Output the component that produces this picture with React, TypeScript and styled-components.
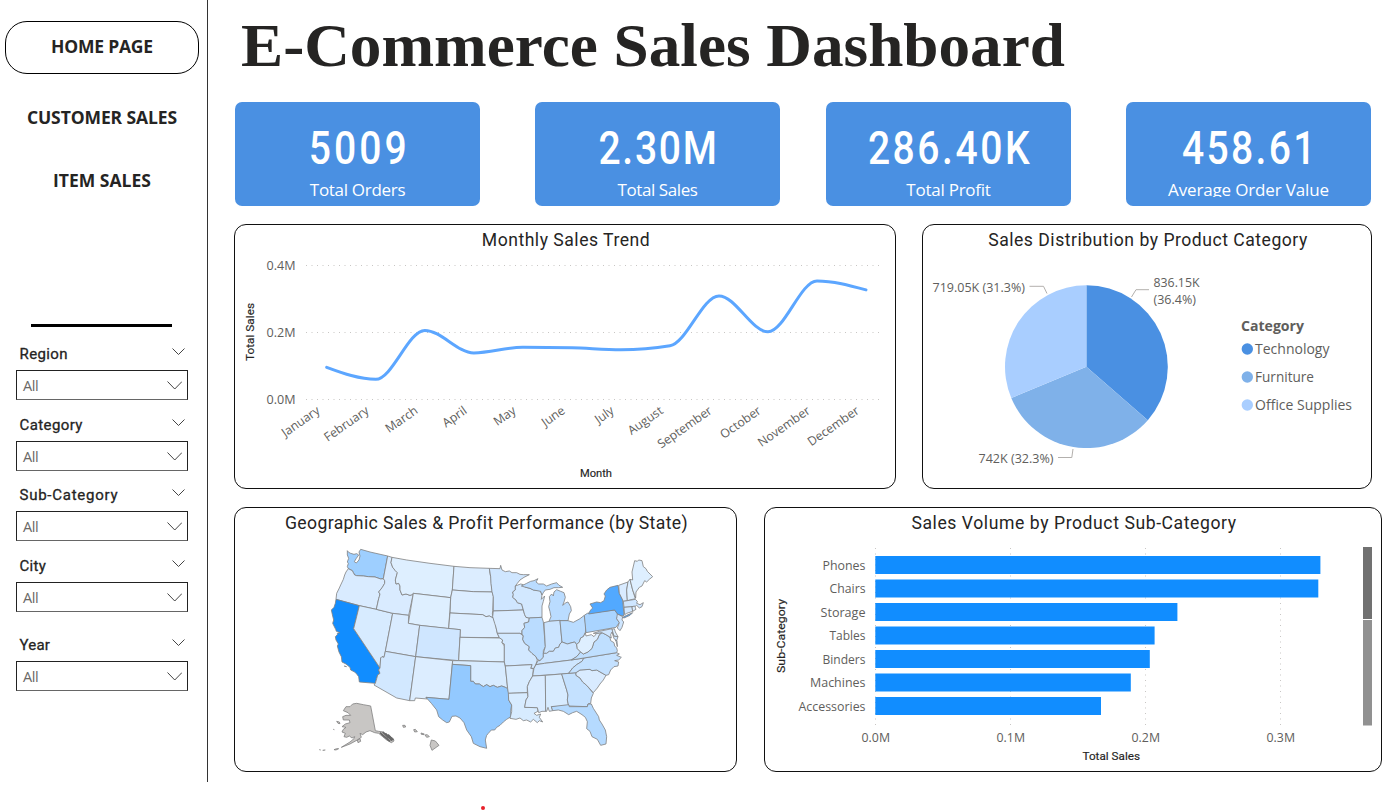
import React from "react";
import styled, { createGlobalStyle } from "styled-components";

const ui = `"Open Sans", "Noto Sans", sans-serif`;
const din = `Roboto, "Liberation Sans", sans-serif`;

const GlobalStyle = createGlobalStyle`
  * { box-sizing: border-box; }
  body { margin: 0; background: #fff; color: #252423; overflow: hidden; }
  h1, h2, h3, p { margin: 0; font-weight: inherit; }
`;

const Page = styled.div`
  width: 1392px;
  height: 811px;
  display: grid;
  grid-template-columns: 208px 1fr;
  grid-template-rows: 782px 29px;
`;

const Sidebar = styled.aside`
  border-right: 1.5px solid #333;
  padding: 21px 0 0 5px;
`;

const Nav = styled.nav`
  display: flex;
  flex-direction: column;
  width: 194px;
`;

const NavItem = styled.a<{ $active?: boolean; $height: number; $track: number }>`
  height: ${(p) => p.$height}px;
  display: flex;
  align-items: center;
  justify-content: center;
  border: ${(p) => (p.$active ? "1px solid #000" : "0")};
  border-radius: 22px;
  padding-bottom: 3px;
  font: 700 17.5px ${ui};
  letter-spacing: ${(p) => p.$track}px;
  white-space: nowrap;
`;

const Divider = styled.hr`
  width: 141px;
  height: 2.5px;
  border: 0;
  background: #000;
  margin: 125px 0 0 26px;
`;

const Filters = styled.div`
  padding: 17px 0 0 11px;
  width: 183px;
`;

const Filter = styled.section<{ $height: number }>`
  height: ${(p) => p.$height}px;
`;

const FilterHead = styled.div`
  height: 26px;
  display: flex;
  justify-content: space-between;
  padding: 2px 3.5px 0;
`;

const FilterLabel = styled.h3<{ $track: number }>`
  font: 400 15px/17px ${din};
  letter-spacing: ${(p) => p.$track}px;
  -webkit-text-stroke: 0.3px #252423;
`;

const Select = styled.div`
  height: 30px;
  border: 1px solid #222;
  border-bottom: 1.5px solid #666;
  padding: 2px 5px 0 6px;
  display: flex;
  align-items: center;
  justify-content: space-between;
  font: 400 14.5px ${ui};
  letter-spacing: -0.4px;
  color: #6a6866;
`;

const Chevron = styled.svg`
  fill: none;
  stroke: #444;
  stroke-width: 1;
`;

const HeadChevron = styled.div`
  padding-top: 2px;
  line-height: 0;
`;

const Main = styled.main`
  padding: 0 0 0 26px;
`;

const Title = styled.h1`
  height: 102px;
  padding: 10px 0 0 7px;
  font: 700 61px/72px "Liberation Serif", serif;
  transform: scaleX(1.036);
  transform-origin: 7px 0;
  white-space: nowrap;
  width: 850px;
`;

const Kpis = styled.div`
  display: grid;
  grid-template-columns: 300px 291px 300px 245px;
  padding-left: 1px;
`;

const Kpi = styled.div`
  width: 245px;
  height: 104px;
  border-radius: 7px;
  background: #4a90e2;
  color: #fff;
  text-align: center;
  padding-top: 19px;
`;

const KpiValue = styled.p<{ $track: number }>`
  font: 500 46.5px/54px ${din};
  letter-spacing: ${(p) => p.$track}px;
  margin-right: ${(p) => -p.$track}px;
  transform: scaleX(0.84);
  white-space: nowrap;
`;

const KpiLabel = styled.p<{ $track: number; $clip?: boolean }>`
  height: ${(p) => (p.$clip ? 22 : 29)}px;
  overflow: ${(p) => (p.$clip ? "hidden" : "visible")};
  font: 400 17px/29px ${ui};
  letter-spacing: ${(p) => p.$track}px;
`;

const Row = styled.div<{ $cols: string }>`
  display: grid;
  grid-template-columns: ${(p) => p.$cols};
  margin-top: 18px;
`;

const Panel = styled.section<{ $width: number }>`
  width: ${(p) => p.$width}px;
  height: 265px;
  border: 1px solid #111;
  border-radius: 12px;
  overflow: hidden;
`;

const PanelTitle = styled.h2<{ $track: number }>`
  height: 30px;
  padding-left: 2px;
  text-align: center;
  font: 400 17.6px/30px ${din};
  letter-spacing: ${(p) => p.$track}px;
  white-space: nowrap;
`;

const Chart = styled.svg`
  display: block;
`;

const Tick = styled.text`
  font: 400 12.3px ${ui};
  fill: #605e5c;
`;

const AxisTitle = styled.text`
  font: 400 11px ${din};
  fill: #252423;
  stroke: #252423;
  stroke-width: 0.15px;
`;

const GridLine = styled.path`
  stroke: #c8c6c4;
  stroke-width: 1;
  stroke-dasharray: 1 4.5;
  fill: none;
`;

const LegendTitle = styled.text`
  font: 700 14px ${ui};
  fill: #605e5c;
`;

const LegendText = styled.text`
  font: 400 14px ${ui};
  fill: #605e5c;
`;

const Footer = styled.footer`
  grid-column: 1 / -1;
  padding: 24px 0 0 481px;
`;

const Marker = styled.div`
  width: 4px;
  height: 4px;
  border-radius: 2px;
  background: #e8202a;
`;

const filters = [
  { name: "Region", height: 71, track: 0.4 },
  { name: "Category", height: 70, track: 0.4 },
  { name: "Sub-Category", height: 71, track: 0.75 },
  { name: "City", height: 79, track: 0.3 },
  { name: "Year", height: 60, track: 0.2 },
];

const kpis = [
  { value: "5009", label: "Total Orders", vt: 3.6, lt: -0.3 },
  { value: "2.30M", label: "Total Sales", vt: 2, lt: -0.4 },
  { value: "286.40K", label: "Total Profit", vt: 3, lt: -0.25 },
  { value: "458.61", label: "Average Order Value", vt: 2.8, lt: -0.15, clip: true },
];

const months: [string, number, number][] = [
  ["January", 326.7, 367.3],
  ["February", 375.8, 379.3],
  ["March", 424.8, 330.4],
  ["April", 473.8, 352.9],
  ["May", 522.9, 347.2],
  ["June", 571.9, 347.8],
  ["July", 620.9, 349.7],
  ["August", 670, 345.8],
  ["September", 719, 295.9],
  ["October", 768, 331.8],
  ["November", 817, 280.9],
  ["December", 866, 289.9],
];

// Monotone cubic interpolation through the monthly values.
function monotone(pts: [number, number][]) {
  const n = pts.length;
  const s = pts.slice(1).map((p, i) => (p[1] - pts[i][1]) / (p[0] - pts[i][0]));
  const t = pts.map((_, i) => {
    if (i === 0 || i === n - 1) return 0;
    const a = s[i - 1];
    const b = s[i];
    return (Math.sign(a) + Math.sign(b)) * Math.min(Math.abs(a), Math.abs(b), 0.25 * Math.abs(a + b));
  });
  t[0] = (3 * s[0] - t[1]) / 2;
  t[n - 1] = (3 * s[n - 2] - t[n - 2]) / 2;
  let d = `M${pts[0][0]},${pts[0][1]}`;
  for (let i = 1; i < n; i++) {
    const h = (pts[i][0] - pts[i - 1][0]) / 3;
    d += `C${pts[i - 1][0] + h},${pts[i - 1][1] + h * t[i - 1]} ${pts[i][0] - h},${pts[i][1] - h * t[i]} ${pts[i][0]},${pts[i][1]}`;
  }
  return d;
}

const bars: [string, number, number][] = [
  ["Phones", 1320.4, 43],
  ["Chairs", 1318.3, 36],
  ["Storage", 1177.4, 45],
  ["Tables", 1154.6, 36],
  ["Binders", 1149.8, 43],
  ["Machines", 1130.8, 55.5],
  ["Accessories", 1101, 67],
];

const west: [string, string][] = [
  ["#9ecfff", "82,32 86,37 92,40 102,43 110,41 116,45 109,55 103,65 109,69 117,60 120,48 117,36 122,28 150,36 203,48 190,116 182,117 165,111 145,110 130,108 110,107 104,105 100,98 97,92 85,86 82,80 85,70 82,66 86,55 82,45"],
  ["#d9ebff", "85,86 97,92 100,98 104,105 110,107 130,108 145,110 165,111 182,117 190,116 194,122 194,130 187,142 176,156 180,162 178,170 176,176 169,208 118,197 48,178 50,160 58,144 62,135 70,118 74,105 78,96"],
  ["#118dff", "48,178 118,197 101,266 180,384 176,390 180,400 173,405 170,416 166,430 118,426 116,410 110,402 104,396 92,390 90,382 78,372 66,366 64,350 57,336 52,318 55,312 48,300 46,290 52,284 52,280 60,278 49,274 47,268 38,250 41,240 38,228 34,210 42,202 46,190"],
  ["#d7ebff", "118,197 169,208 218,220 196,334 192,352 186,350 182,354 180,384 101,266"],
  ["#d9ebff", "203,48 216,52 213,68 218,82 226,92 232,98 226,120 228,132 236,130 240,138 240,150 246,165 258,162 270,166 276,164 280,160 266,226 218,220 169,208 176,176 178,170 180,162 176,156 187,142 194,130 194,122 190,116"],
  ["#deefff", "216,52 260,60 330,70 402,79 397,150 392,173 280,160 276,164 270,166 258,162 246,165 240,150 240,138 236,130 228,132 226,120 232,98 226,92 218,82 213,68"],
  ["#dcedff", "402,79 450,83 508,85 510,100 513,115 514,135 517,156 460,155 397,150"],
  ["#dcedff", "397,150 460,155 517,156 520,170 518,212 517,222 520,234 508,228 498,230 488,224 390,219 392,173"],
  ["#deefff", "280,160 392,173 386,266 299,256 265,250"],
  ["#dcedff", "390,219 488,224 498,230 508,228 520,234 526,250 528,262 532,280 538,293 420,292 421,269 386,266"],
  ["#d9ebff", "218,220 266,226 265,250 299,256 287,350 196,334"],
  ["#cfe6ff", "299,256 421,269 416,362 287,350"],
  ["#d2e8ff", "196,334 287,350 269,482 230,474 162,435 166,430 170,416 173,405 180,400 176,390 180,384 182,354 186,350 192,352"],
  ["#dcedff", "287,350 398,362 387,478 318,472 322,477 286,474 284,482 269,482"],
  ["#deefff", "420,292 540,294 548,300 546,308 553,318 553,366 416,362"],
  ["#d7ebff", "398,362 416,362 553,366 556,380 563,446 556,442 545,438 532,442 520,436 510,440 500,434 490,440 478,432 466,432 460,424 452,424 452,377 397,373"],
  ["#93c9ff", "397,373 452,377 452,424 460,424 466,432 478,432 490,440 500,434 510,440 520,436 532,442 545,438 556,442 563,446 566,458 566,480 575,495 572,512 573,530 560,538 550,546 540,556 530,562 524,570 514,570 505,580 500,586 496,600 500,625 480,620 460,610 454,590 440,570 432,548 420,534 408,528 396,529 388,546 380,548 368,540 356,530 350,510 334,490 318,472 387,478"],
];

const east: [string, string][] = [
  ["#cfe6ff", "28,85 60,86 62,76 66,90 76,95 88,93 96,98 110,98 120,103 130,104 148,104 132,112 120,120 112,130 106,138 106,150 98,156 100,164 98,172 108,180 112,188 125,192 130,210 40,213 40,170 36,155 33,130 32,110"],
  ["#d9ebff", "40,213 130,210 134,224 138,232 148,234 146,246 132,250 134,262 126,272 126,282 120,280 52,280 48,262 44,250 38,230"],
  ["#d2e8ff", "52,280 120,280 130,288 128,298 134,310 148,320 146,330 156,340 168,350 172,360 168,372 162,385 152,385 156,374 76,378 73,366 73,312 66,308 68,300 58,293"],
  ["#d7ebff", "76,378 156,374 152,385 160,386 158,408 148,425 142,440 142,458 85,460 83,446"],
  ["#d7ebff", "85,460 142,458 144,470 138,480 134,502 172,503 174,514 162,520 170,526 182,522 178,532 188,546 178,542 172,548 160,538 152,546 140,540 130,542 120,534 108,538 90,535 95,515 95,495 86,480"],
  ["#d2e8ff", "106,138 122,132 130,134 134,141 150,145 160,150 180,152 184,160 186,165 184,178 194,168 190,184 186,198 186,232 148,234 138,232 134,224 130,210 125,192 112,188 108,180 98,172 100,164 98,156 106,150"],
  ["#badcff", "124,138 140,130 152,124 162,122 174,116 168,126 176,132 190,132 200,138 215,132 230,128 236,135 248,142 236,143 222,143 210,148 196,150 190,158 186,165 182,154 160,150 150,145 134,141"],
  ["#badcff", "207,244 213,230 210,215 206,200 210,185 208,170 215,162 220,168 222,156 230,149 242,154 252,158 256,172 252,186 248,196 258,188 264,186 272,200 274,212 268,222 264,242 240,242"],
  ["#badcff", "148,234 186,232 190,246 196,320 190,332 190,352 180,362 172,358 168,350 156,340 146,330 148,320 134,310 128,298 130,288 126,282 126,272 134,262 132,250 146,246"],
  ["#cbe4ff", "192,248 207,244 240,241 246,306 240,312 236,322 226,324 220,334 208,334 200,340 190,340 196,320"],
  ["#badcff", "240,242 264,242 280,247 300,236 313,226 318,262 316,278 310,290 302,294 298,306 290,314 284,306 276,308 262,312 246,306"],
  ["#cbe4ff", "190,340 200,340 208,334 220,334 226,324 236,322 240,312 246,306 262,312 276,308 284,306 290,314 292,326 302,336 290,350 274,360 194,370 168,374 174,362 180,362 190,352"],
  ["#cfe6ff", "168,374 194,370 274,360 312,354 306,364 290,374 278,384 266,400 245,402 158,408 162,385"],
  ["#d9ebff", "158,408 196,406 197,514 186,514 176,518 172,503 134,502 138,480 144,470 142,440 148,425"],
  ["#d7ebff", "196,406 245,402 260,450 264,465 262,480 266,498 214,500 218,512 208,514 204,502 200,514 197,514"],
  ["#c4e1ff", "245,402 288,398 288,406 300,414 308,426 320,436 340,460 334,474 332,490 324,492 322,500 266,498 262,480 264,465 260,450"],
  ["#b5daff", "214,500 266,494 268,500 322,500 324,492 334,492 340,505 356,530 358,540 366,552 376,570 380,590 378,612 362,616 352,598 336,590 330,574 320,566 322,545 316,532 306,524 290,514 278,518 266,524 250,514 235,510 218,512"],
  ["#d9ebff", "288,398 300,390 330,388 336,392 350,390 378,406 370,420 360,432 352,444 340,458 320,436 308,426 300,414 288,406"],
  ["#c4e1ff", "312,354 410,338 418,342 410,346 424,352 416,360 404,362 416,366 414,378 402,380 392,390 386,404 378,406 350,390 336,392 330,388 300,390 288,398 266,400 278,384 290,374 306,364"],
  ["#bfdfff", "274,360 290,350 302,336 310,342 324,336 336,325 342,306 352,298 358,284 366,278 378,284 390,292 392,302 402,308 404,318 410,324 412,332 410,338 312,354"],
  ["#deefff", "290,314 298,306 302,294 310,290 316,278 318,288 334,284 342,290 350,280 366,278 358,284 352,298 342,306 336,325 324,336 310,342 302,336 292,326"],
  ["#a9d4ff", "313,226 322,220 404,210 410,218 416,222 410,236 418,248 408,262 318,278"],
  ["#52a9ff", "326,220 332,210 338,204 330,192 350,186 362,188 372,182 376,168 372,162 380,150 390,142 414,136 418,160 428,180 432,226 426,228 412,222 404,210 326,222"],
  ["#52a9ff", "428,232 440,226 458,218 450,226 432,234"],
  ["#cfe6ff", "412,222 428,230 426,240 431,246 426,262 420,272 412,264 418,248 410,236"],
  ["#cfe6ff", "340,280 358,274 396,266 402,288 414,290 410,302 402,296 396,276 392,284 394,294 378,284 366,278 350,280"],
  ["#deefff", "396,268 403,266 406,276 414,290 402,288"],
  ["#bfdfff", "406,300 411,302 412,320 409,306"],
  ["#d9ebff", "416,136 444,126 440,150 442,182 430,184 428,180 418,160"],
  ["#deefff", "444,126 450,118 458,150 466,176 442,182 440,150"],
  ["#deefff", "450,118 458,120 456,96 464,62 472,64 476,60 486,62 490,80 498,86 502,94 518,110 508,118 500,126 494,122 486,138 478,142 468,156 467,174 458,150"],
  ["#cfe6ff", "430,184 466,178 472,184 470,190 480,194 490,188 486,200 478,204 470,196 464,200 432,202"],
  ["#d2e8ff", "432,202 456,200 458,214 440,220 434,224"],
  ["#dcedff", "456,200 464,198 468,208 458,214"],
];

const remote: string[] = [
  "110,490 130,494 152,498 166,572 176,574 190,576 204,586 220,596 222,603 214,608 200,600 188,590 176,580 164,578 150,572 138,576 128,584 120,580 124,592 112,600 90,612 64,622 90,606 102,596 104,590 96,594 88,588 80,592 72,590 76,580 66,576 70,568 78,562 66,560 76,552 90,548 88,540 70,540 68,530 78,526 92,526 84,518 70,512 78,500 90,500 98,492",
  "112,600 120,596 122,604 114,608",
  "50,544 58,546 60,551 54,550",
  "42,629 50,626 56,626 48,630",
  "248,556 255,556 257,561 250,562",
  "281,569 286,568 292,575 284,576",
  "303,579 313,582 312,584 304,583",
  "315,585 322,584 328,590 320,592",
  "334,600 346,603 357,616 336,631 330,616",
];

function Chev({ w, h }: { w: number; h: number }) {
  return (
    <Chevron width={w + 1} height={h + 1} viewBox={`-0.5 -0.5 ${w + 1} ${h + 1}`}>
      <path d={`M0,0L${w / 2},${h - 0.5}L${w},0`} />
    </Chevron>
  );
}

function TrendChart() {
  return (
    <Chart width="660" height="233" viewBox="235 255 660 233">
      {[265.5, 332.5, 399.5].map((y, i) => (
        <g key={y}>
          <GridLine d={`M306,${y}H882`} />
          <Tick x="266.5" y={y + 4.7} textLength="29" lengthAdjust="spacingAndGlyphs">{["0.4M", "0.2M", "0.0M"][i]}</Tick>
        </g>
      ))}
      <path d={monotone(months.map((m) => [m[1], m[2]]))} fill="none" stroke="#5ca6ff" strokeWidth="3" strokeLinecap="round" />
      {months.map(([name, x]) => (
        <Tick key={name} textAnchor="end" transform={`translate(${x - 6},412.5) rotate(-35)`}>{name}</Tick>
      ))}
      <AxisTitle x="580" y="477" textLength="32" lengthAdjust="spacingAndGlyphs">Month</AxisTitle>
      <AxisTitle transform="translate(254,361) rotate(-90)" textLength="58" lengthAdjust="spacingAndGlyphs">Total Sales</AxisTitle>
    </Chart>
  );
}

function PieChart() {
  const cx = 1086.4;
  const cy = 366.7;
  const r = 81.4;
  const at = (f: number) => `${cx + r * Math.sin(f * 2 * Math.PI)},${cy - r * Math.cos(f * 2 * Math.PI)}`;
  const slices: [number, number, string][] = [
    [0, 0.364, "#4a90e2"],
    [0.364, 0.687, "#7fb1e9"],
    [0.687, 1, "#a9ceff"],
  ];
  const legend: [string, string, number][] = [
    ["Technology", "#4a90e2", 74.5],
    ["Furniture", "#7fb1e9", 59],
    ["Office Supplies", "#a9ceff", 97],
  ];
  return (
    <Chart width="448" height="233" viewBox="923 255 448 233">
      {slices.map(([a, b, c]) => (
        <path key={c} d={`M${cx},${cy}L${at(a)}A${r},${r} 0 0 1 ${at(b)}Z`} fill={c} />
      ))}
      <path d="M1029.5,286.3H1043.5L1047,293.5M1149,289.7H1136L1131.5,297M1058,457.5H1071.8L1073,449" fill="none" stroke="#b3b0ad" />
      <Tick x="932.5" y="292" textLength="92.5" lengthAdjust="spacingAndGlyphs">719.05K (31.3%)</Tick>
      <Tick x="1153.5" y="287" textLength="46" lengthAdjust="spacingAndGlyphs">836.15K</Tick>
      <Tick x="1153.5" y="304.3" textLength="42.5" lengthAdjust="spacingAndGlyphs">(36.4%)</Tick>
      <Tick x="978.5" y="463" textLength="75" lengthAdjust="spacingAndGlyphs">742K (32.3%)</Tick>
      <LegendTitle x="1241" y="331" textLength="63" lengthAdjust="spacingAndGlyphs">Category</LegendTitle>
      {legend.map(([name, color, len], i) => (
        <g key={name}>
          <circle cx="1247.3" cy={349 + i * 28} r="5.7" fill={color} />
          <LegendText x="1255" y={354 + i * 28} textLength={len} lengthAdjust="spacingAndGlyphs">{name}</LegendText>
        </g>
      ))}
    </Chart>
  );
}

function StateMap() {
  return (
    <Chart width="501" height="233" viewBox="235 538 501 233">
      <g transform="translate(320,540) scale(0.33333)" stroke="#808080" strokeWidth="2.4" strokeLinejoin="round">
        {west.map(([fill, pts], i) => <polygon key={i} fill={fill} points={pts} />)}
        <g transform="translate(480,0)">
          {east.map(([fill, pts], i) => <polygon key={i} fill={fill} points={pts} />)}
        </g>
        {remote.map((pts, i) => <polygon key={i} fill="#c8c6c4" points={pts} />)}
        <path d="M180,578L196,592M188,576L206,594M196,580L216,602M204,584L220,600M184,582L210,604" stroke="#666" strokeWidth="5" fill="none" />
        <path d="M72,378L80,380M-2,629L2,630M8,631L16,630M40,568L43,569" fill="none" strokeWidth="3" />
      </g>
    </Chart>
  );
}

function BarChart() {
  return (
    <Chart width="616" height="233" viewBox="765 538 616 233">
      {[0, 1, 2, 3].map((i) => (
        <g key={i}>
          <GridLine d={`M${875.5 + i * 135},548V726`} />
          <Tick x={861.5 + i * 135} y="742" textLength="28.5" lengthAdjust="spacingAndGlyphs">{`0.${i}M`}</Tick>
        </g>
      ))}
      {bars.map(([name, end, len], i) => (
        <g key={name}>
          <rect x="875.3" y={556 + i * 23.5} width={end - 875.3} height="18" fill="#118dff" />
          <Tick x={865.5 - len} y={569.8 + i * 23.5} textLength={len} lengthAdjust="spacingAndGlyphs">{name}</Tick>
        </g>
      ))}
      <rect x="1363" y="547" width="9" height="72" fill="#717171" />
      <rect x="1363" y="620" width="9" height="105.5" fill="#919191" />
      <AxisTitle transform="translate(785,673) rotate(-90)" textLength="74" lengthAdjust="spacingAndGlyphs">Sub-Category</AxisTitle>
      <AxisTitle x="1082.5" y="760" textLength="57.5" lengthAdjust="spacingAndGlyphs">Total Sales</AxisTitle>
    </Chart>
  );
}

export default function App() {
  return (
    <Page>
      <GlobalStyle />
      <Sidebar>
        <Nav>
          <NavItem $active $height={53} $track={-0.2}>HOME PAGE</NavItem>
          <NavItem $height={89} $track={-0.1}>CUSTOMER SALES</NavItem>
          <NavItem $height={36} $track={0}>ITEM SALES</NavItem>
        </Nav>
        <Divider />
        <Filters>
          {filters.map((f) => (
            <Filter key={f.name} $height={f.height}>
              <FilterHead>
                <FilterLabel $track={f.track}>{f.name}</FilterLabel>
                <HeadChevron>
                  <Chev w={12} h={6.5} />
                </HeadChevron>
              </FilterHead>
              <Select>
                All
                <Chev w={14.5} h={8} />
              </Select>
            </Filter>
          ))}
        </Filters>
      </Sidebar>
      <Main>
        <Title>E-Commerce Sales Dashboard</Title>
        <Kpis>
          {kpis.map((k) => (
            <Kpi key={k.label}>
              <KpiValue $track={k.vt}>{k.value}</KpiValue>
              <KpiLabel $track={k.lt} $clip={k.clip}>{k.label}</KpiLabel>
            </Kpi>
          ))}
        </Kpis>
        <Row $cols="688px 450px">
          <Panel $width={662}>
            <PanelTitle $track={0.5}>Monthly Sales Trend</PanelTitle>
            <TrendChart />
          </Panel>
          <Panel $width={450}>
            <PanelTitle $track={0.5}>Sales Distribution by Product Category</PanelTitle>
            <PieChart />
          </Panel>
        </Row>
        <Row $cols="530px 618px">
          <Panel $width={503}>
            <PanelTitle $track={0.37}>Geographic Sales &amp; Profit Performance (by State)</PanelTitle>
            <StateMap />
          </Panel>
          <Panel $width={618}>
            <PanelTitle $track={0.57}>Sales Volume by Product Sub-Category</PanelTitle>
            <BarChart />
          </Panel>
        </Row>
      </Main>
      <Footer>
        <Marker />
      </Footer>
    </Page>
  );
}
